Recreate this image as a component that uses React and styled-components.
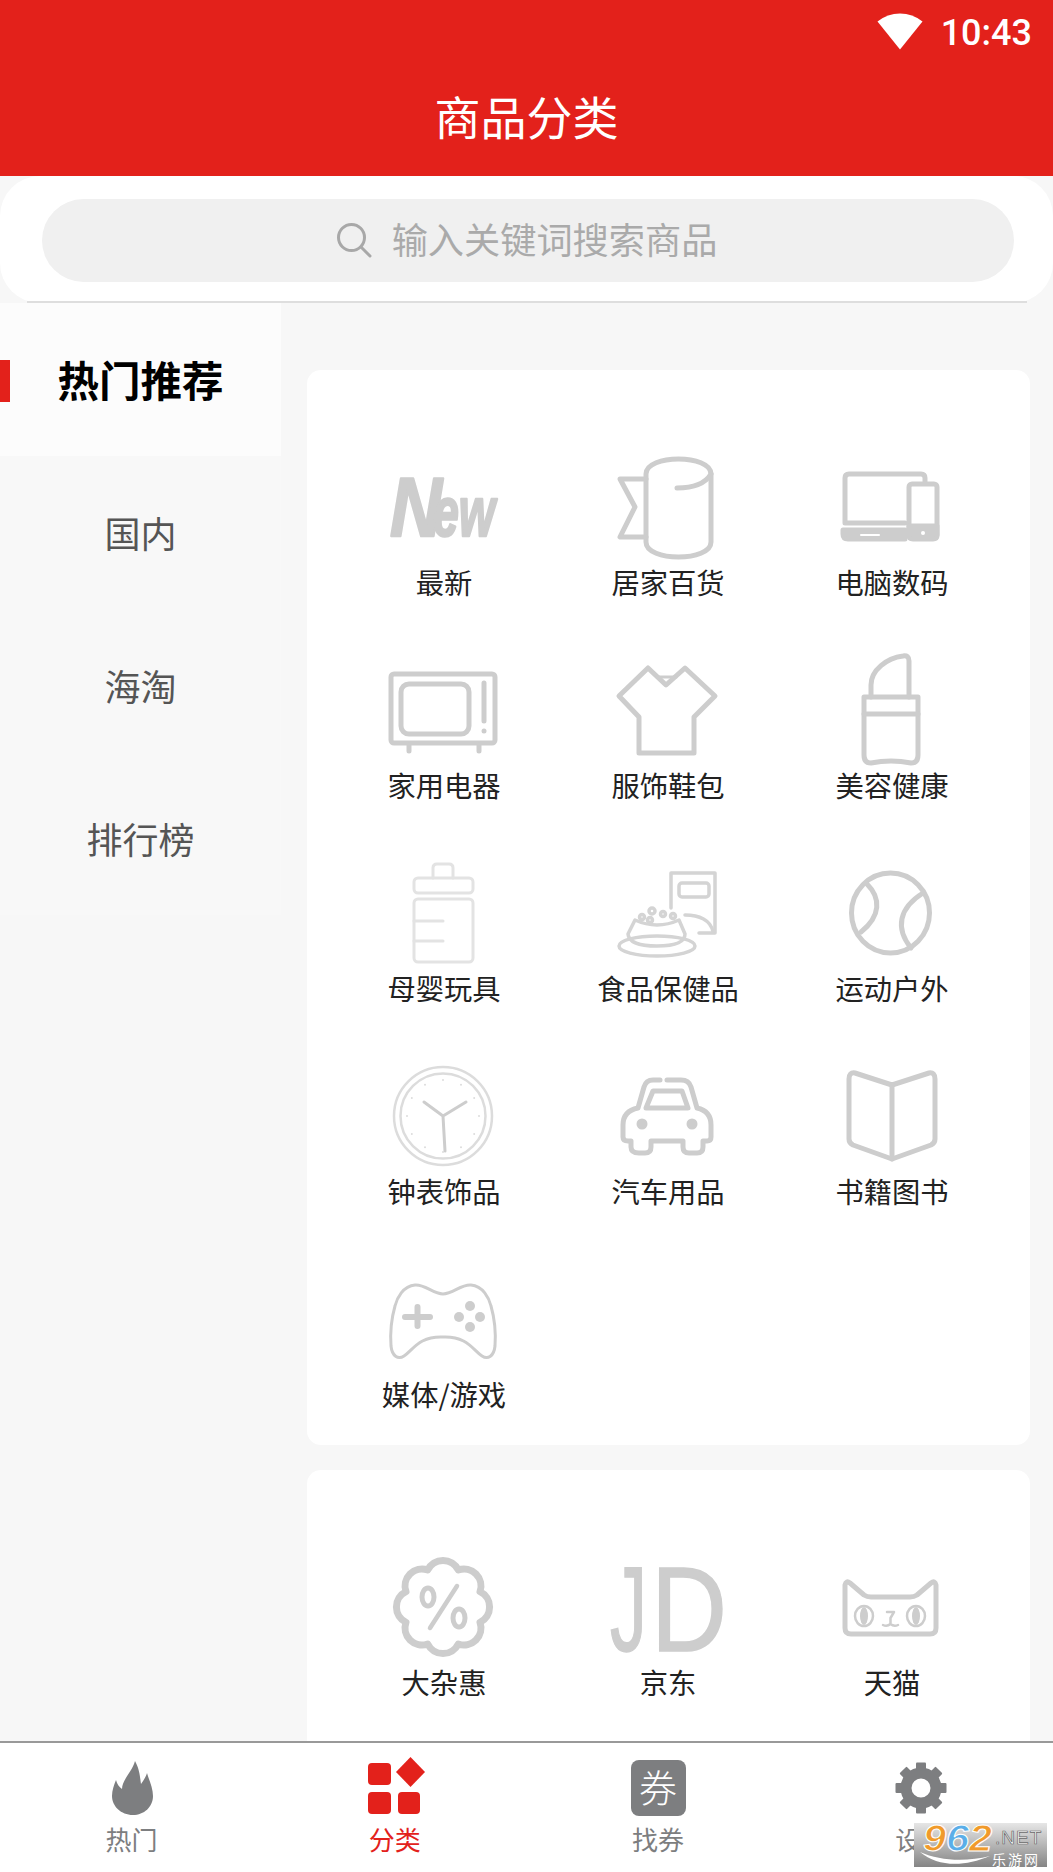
import React from 'react'
import styled, { createGlobalStyle } from 'styled-components'

const CJK = `"Noto Sans CJK SC", "Noto Sans", sans-serif`

const Global = createGlobalStyle`
  html, body {
    margin: 0;
    padding: 0;
    background: #fff;
  }
  * {
    box-sizing: border-box;
  }
`

const Page = styled.div`
  position: relative;
  width: 1053px;
  height: 1872px;
  display: flex;
  flex-direction: column;
  overflow: hidden;
  background: #f7f7f7;
  font-family: ${CJK};
`

const Header = styled.header`
  height: 176px;
  flex: none;
  background: #e3211b;
  color: #fff;
`

const StatusBar = styled.div`
  height: 66px;
  display: flex;
  align-items: center;
  justify-content: flex-end;
  gap: 18px;
  padding-right: 21px;
`

const WifiIcon = styled.svg.attrs({ viewBox: '0 0 46 37' })`
  width: 46px;
  height: 37px;
  margin-bottom: 4px;
  fill: #fff;
`

const Clock = styled.span`
  font-family: Roboto, sans-serif;
  font-weight: 500;
  font-size: 36px;
  line-height: 66px;
`

const Title = styled.h1`
  margin: 0;
  height: 98px;
  font-size: 46px;
  font-weight: 400;
  line-height: 98px;
  text-align: center;
`

const SearchSection = styled.div`
  height: 127px;
  flex: none;
  background: #fff;
  border-radius: 40px;
  display: flex;
  flex-direction: column;
`

const SearchPill = styled.div`
  height: 83px;
  margin: 23px 39px 0 42px;
  padding: 0 3px 2px 0;
  border-radius: 42px;
  background: #f0f0f0;
  display: flex;
  align-items: center;
  justify-content: center;
  gap: 20px;
  color: #aaa;
  font-size: 36.2px;
`

const SearchText = styled.span`
  padding-bottom: 4px;
`

const Divider = styled.div`
  height: 2px;
  margin: 19px 26px 0 27px;
  background: #dedede;
`

const Main = styled.div`
  flex: 1;
  min-height: 0;
  display: flex;
  overflow: hidden;
`

const Sidebar = styled.nav`
  width: 281px;
  flex: none;
`

const SideItem = styled.div`
  position: relative;
  height: 153px;
  padding-bottom: 2px;
  display: flex;
  align-items: center;
  justify-content: center;
  background: ${p => (p.$active ? '#fcfcfc' : '#f8f8f8')};
  color: ${p => (p.$active ? '#000' : '#555')};
  font-size: ${p => (p.$active ? '41.5px' : '36px')};
  font-weight: ${p => (p.$active ? 700 : 400)};

  ${p =>
    p.$active &&
    `&::before {
      content: '';
      position: absolute;
      left: 0;
      top: 57px;
      width: 10px;
      height: 42px;
      background: #e3211b;
    }`}
`

const Pane = styled.div`
  flex: 1;
  padding: 67px 23px 0 26px;
  display: flex;
  flex-direction: column;
  gap: 25px;
`

const Card = styled.section`
  flex: none;
  background: #fff;
  border-radius: 14px;
  padding: 82px 26px 31px 25px;
  display: grid;
  grid-template-columns: repeat(3, 224px);
  align-content: start;
  row-gap: 53px;

  /* the last card runs on under the tab bar */
  &:last-child {
    flex: 1;
    margin-bottom: -30px;
  }
`

const Cell = styled.div`
  display: flex;
  flex-direction: column;
  align-items: center;
`

const CellLabel = styled.span`
  font-size: 28.3px;
  line-height: 40px;
  color: #222;
  white-space: nowrap;
`

const Glyph = styled.svg.attrs({ viewBox: '0 0 110 110' })`
  width: 110px;
  height: 110px;
  overflow: visible;
  fill: none;
  stroke: ${p => p.$tone || '#cdcdcd'};
  stroke-width: ${p => p.$weight || 5}px;
  stroke-linecap: round;
  stroke-linejoin: round;
`

const BottomNav = styled.footer`
  height: 131px;
  flex: none;
  border-top: 2px solid #999;
  background: #fff;
  display: grid;
  grid-template-columns: repeat(4, 1fr);
  padding-top: 15px;
`

const NavItem = styled.div`
  display: flex;
  flex-direction: column;
  align-items: center;
  color: ${p => (p.$active ? '#e3211b' : '#7d7e80')};
  font-size: 26px;
`

const NavIcon = styled.svg.attrs({ viewBox: '0 0 60 60' })`
  width: 60px;
  height: 60px;
  fill: currentColor;
  overflow: visible;
`

const NavLabel = styled.span`
  margin-top: 3px;
  line-height: 36px;
`

const CouponSlot = styled.div`
  width: 60px;
  height: 60px;
  display: flex;
  align-items: center;
  justify-content: center;
`

const CouponBadge = styled.div`
  width: 55px;
  height: 56px;
  border-radius: 8px;
  background: #7d7e80;
  color: #fff;
  font-size: 38px;
  font-weight: 300;
  line-height: 52px;
  text-align: center;
`

const Watermark = styled.div`
  position: absolute;
  left: 914px;
  top: 1823px;
  width: 133px;
  height: 44px;
  background: linear-gradient(180deg, #e6e6e6, #858585);
  overflow: hidden;
`

const MarkDigits = styled.span`
  position: absolute;
  left: 9px;
  top: 1px;
  transform: scaleX(1.15);
  transform-origin: left top;
  font-family: 'Liberation Sans', sans-serif;
  font-style: italic;
  font-weight: 700;
  font-size: 36px;
  line-height: 30px;
  color: #f09a2b;
  -webkit-text-stroke: 1px #fff;

  b {
    color: #5aaee8;
  }
`

const MarkNet = styled.span`
  position: absolute;
  left: 81px;
  top: 5px;
  font-family: 'Liberation Sans', sans-serif;
  font-size: 19px;
  line-height: 20px;
  letter-spacing: 1px;
  color: #fff;
  -webkit-text-stroke: 0.7px #666;
`

const MarkCn = styled.span`
  position: absolute;
  left: 78px;
  top: 28px;
  font-size: 14px;
  line-height: 16px;
  letter-spacing: 2px;
  color: #fff;
`

const MarkSwoosh = styled.svg.attrs({ viewBox: '0 0 133 44' })`
  position: absolute;
  inset: 0;
  width: 133px;
  height: 44px;
`

const IconNew = () => (
  <Glyph>
    <g fill="#cdcdcd" stroke="#cdcdcd" strokeWidth="2.5" fontFamily="'Liberation Sans', sans-serif" fontWeight="700" fontStyle="italic">
      <text x="1" y="84" fontSize="83" textLength="52" lengthAdjust="spacingAndGlyphs">N</text>
      <text x="44" y="84" fontSize="70" textLength="62" lengthAdjust="spacingAndGlyphs">ew</text>
    </g>
  </Glyph>
)

const IconRoll = () => (
  <Glyph>
    <path d="M33 22C33 2 98 2 98 22V90C98 110 33 110 33 90Z" />
    <path d="M64 36C80 36 92 32 98 22" />
    <path d="M33 27H7L22 55L7 85H33" />
  </Glyph>
)

const IconDevices = () => (
  <Glyph>
    <path d="M88 30V26Q88 22 84 22H12Q8 22 8 26V71H68" />
    <path d="M6 78H68V87H11Q6 87 6 82Z" fill="#cdcdcd" />
    <rect x="72" y="32" width="28" height="54" rx="3" />
    <path d="M72 74H100V83Q100 87 96 87H76Q72 87 72 83Z" fill="#cdcdcd" />
    <circle cx="86" cy="81" r="2" fill="#fff" stroke="none" />
    <path d="M24 83H42" stroke="#fff" strokeWidth="2" />
  </Glyph>
)

const IconTv = () => (
  <Glyph>
    <rect x="2" y="19" width="104" height="69" rx="3" />
    <rect x="12" y="29" width="68" height="50" rx="8" />
    <path d="M95 28V66M20 90V96M90 90V96" />
    <circle cx="95" cy="76" r="2.5" fill="#cdcdcd" stroke="none" />
  </Glyph>
)

const IconShirt = () => (
  <Glyph>
    <path d="M35 13L53 30L72 13L102 41L81 62V98H26V62L6 41Z" />
    <path d="M44 22H63" strokeWidth="3" />
  </Glyph>
)

const IconLipstick = () => (
  <Glyph>
    <path d="M34 42V30C34 15 50 3 66 1Q72 0 72 6V42" />
    <path d="M27 42H81V100Q81 108 74 108Q54 104 34 108Q27 108 27 100Z" />
    <path d="M27 59H81" />
  </Glyph>
)

const IconBottle = () => (
  <Glyph $tone="#e3e3e3" $weight={3}>
    <path d="M44 20V10Q44 6 48 6H60Q64 6 64 10V20" />
    <rect x="25" y="20" width="59" height="15" rx="4" />
    <rect x="25" y="41" width="59" height="63" rx="4" />
    <path d="M25 63H54M25 83H54" />
  </Glyph>
)

const IconPetFood = () => (
  <Glyph $weight={3.5} $tone="#d4d4d4">
    <path d="M58 50V15H102V75H86" />
    <path d="M72 57C86 57 98 62 100 74" />
    <rect x="66" y="25" width="30" height="14" rx="3" />
    <path d="M22 62L15 76Q16 88 44 88Q72 88 72 76L66 62Q44 72 22 62Z" />
    <ellipse cx="44" cy="88" rx="38" ry="10" />
    <circle cx="29" cy="59" r="2.5" />
    <circle cx="39" cy="53" r="3" />
    <circle cx="37" cy="62" r="2.5" />
    <circle cx="50" cy="56" r="2.5" />
    <circle cx="60" cy="58" r="2.5" />
  </Glyph>
)

const IconBall = () => (
  <Glyph>
    <ellipse cx="53.5" cy="55" rx="39" ry="40" />
    <path d="M30 26C44 40 44 58 24 74" />
    <path d="M86 35C62 50 58 70 74 90" />
  </Glyph>
)

const ticks = [0, 30, 60, 90, 120, 150, 180, 210, 240, 270, 300, 330]

const IconClock = () => (
  <Glyph $tone="#dcdcdc" $weight={2.5}>
    <circle cx="54" cy="55" r="49" />
    <circle cx="54" cy="55" r="42.5" />
    {ticks.map(a => (
      <circle
        key={a}
        cx={54 + 36 * Math.sin((a * Math.PI) / 180)}
        cy={55 - 36 * Math.cos((a * Math.PI) / 180)}
        r="1"
        fill="#dcdcdc"
        stroke="none"
      />
    ))}
    <path d="M54 55L35 41M54 55L77 41M54 55L56 90" stroke="#cdcdcd" strokeWidth="3" />
  </Glyph>
)

const IconCar = () => (
  <Glyph>
    <path d="M47 19H40Q33 19 31 26L25 47Q10 50 10 64V76Q10 80 15 80H18V86Q18 92 26 92H32Q38 92 38 86V80H70V86Q70 92 76 92H84Q90 92 90 86V80H94Q98 80 98 76V64Q98 50 84 47L78 26Q76 19 68 19H54" />
    <path d="M33 47L40 30H69L75 47Z" />
    <circle cx="29" cy="63" r="5.5" fill="#cdcdcd" stroke="none" />
    <circle cx="79" cy="63" r="5.5" fill="#cdcdcd" stroke="none" />
  </Glyph>
)

const IconBook = () => (
  <Glyph>
    <path d="M55 24L18 12Q12 11 12 18V78Q12 82 16 84L55 98L94 84Q98 82 98 78V18Q98 11 92 12Z" />
    <path d="M55 24V98" />
  </Glyph>
)

const IconGamepad = () => (
  <Glyph $weight={3}>
    <path d="M54 30C44 30 36 20 26 21C14 22 8 34 6 42C2 56 1 68 2 82C3 92 9 96 15 92C24 86 30 72 54 73C78 72 84 86 93 92C99 96 105 92 106 82C107 68 106 56 102 42C100 34 94 22 82 21C72 20 64 30 54 30Z" />
    <path d="M28.5 43V62M16 53H41" strokeWidth="6" />
    <g fill="#cdcdcd" stroke="none">
      <circle cx="81" cy="42" r="5" />
      <circle cx="81" cy="63" r="5" />
      <circle cx="70" cy="53" r="5" />
      <circle cx="91" cy="53" r="5" />
    </g>
  </Glyph>
)

const IconDiscount = () => (
  <Glyph $weight={7}>
    <path d="M69.3 18A17 17 0 0 1 91 39.7A17 17 0 0 1 91 70.3A17 17 0 0 1 69.3 92A17 17 0 0 1 38.7 92A17 17 0 0 1 17 70.3A17 17 0 0 1 17 39.7A17 17 0 0 1 38.7 18A17 17 0 0 1 69.3 18Z" />
    <ellipse cx="39" cy="45" rx="6" ry="9" strokeWidth="5" />
    <ellipse cx="70" cy="66" rx="6" ry="9" strokeWidth="5" />
    <path d="M68 34L41 76" strokeWidth="4.5" />
  </Glyph>
)

const IconJd = () => (
  <Glyph>
    <g fontFamily="'Liberation Sans', sans-serif" fontSize="120" fill="#cdcdcd" strokeWidth="1.5" strokeLinejoin="miter">
      <text x="-3" y="99" textLength="37" lengthAdjust="spacingAndGlyphs">J</text>
      <text x="38" y="99" textLength="76" lengthAdjust="spacingAndGlyphs">D</text>
    </g>
  </Glyph>
)

const IconCat = () => (
  <Glyph>
    <path d="M8 33Q9 28 13 31L27 43Q30 45 34 45H73Q77 45 80 43L94 31Q98 28 99 33V76Q99 82 93 82H14Q8 82 8 76Z" />
    <g strokeWidth="2.5">
      <ellipse cx="27" cy="64" rx="9" ry="10" />
      <ellipse cx="79" cy="64" rx="9" ry="10" />
      <path d="M50 60H57L53.5 66V72M46 73Q50 75 53.5 72Q57 75 61 73" />
    </g>
    <ellipse cx="27" cy="64" rx="4" ry="9" fill="#cdcdcd" stroke="none" />
    <ellipse cx="79" cy="64" rx="4" ry="9" fill="#cdcdcd" stroke="none" />
  </Glyph>
)

const MAIN_CATEGORIES = [
  ['最新', IconNew],
  ['居家百货', IconRoll],
  ['电脑数码', IconDevices],
  ['家用电器', IconTv],
  ['服饰鞋包', IconShirt],
  ['美容健康', IconLipstick],
  ['母婴玩具', IconBottle],
  ['食品保健品', IconPetFood],
  ['运动户外', IconBall],
  ['钟表饰品', IconClock],
  ['汽车用品', IconCar],
  ['书籍图书', IconBook],
  ['媒体/游戏', IconGamepad],
]

const STORES = [
  ['大杂惠', IconDiscount],
  ['京东', IconJd],
  ['天猫', IconCat],
]

const SIDE_ITEMS = ['热门推荐', '国内', '海淘', '排行榜']

const Grid = ({ items }) => (
  <Card>
    {items.map(([label, Icon]) => (
      <Cell key={label}>
        <Icon />
        <CellLabel>{label}</CellLabel>
      </Cell>
    ))}
  </Card>
)

const gearTeeth = [0, 45, 90, 135, 180, 225, 270, 315]

export default function App() {
  return (
    <Page>
      <Global />
      <Header>
        <StatusBar>
          <WifiIcon>
            <path d="M23 36.5L0.5 8.5Q10.5 0.5 23 0.5Q35.5 0.5 45.5 8.5Z" />
          </WifiIcon>
          <Clock>10:43</Clock>
        </StatusBar>
        <Title>商品分类</Title>
      </Header>
      <SearchSection>
        <SearchPill>
          <svg width="36" height="36" viewBox="0 0 36 36" fill="none" stroke="#a8a8a8" strokeWidth="3">
            <circle cx="15.5" cy="15.5" r="13" />
            <path d="M25 25L34 34" strokeLinecap="round" />
          </svg>
          <SearchText>输入关键词搜索商品</SearchText>
        </SearchPill>
        <Divider />
      </SearchSection>
      <Main>
        <Sidebar>
          {SIDE_ITEMS.map((item, i) => (
            <SideItem key={item} $active={i === 0}>
              {item}
            </SideItem>
          ))}
        </Sidebar>
        <Pane>
          <Grid items={MAIN_CATEGORIES} />
          <Grid items={STORES} />
        </Pane>
      </Main>
      <BottomNav>
        <NavItem>
          <NavIcon>
            <path d="M33 3C38 12 38 20 39 26C41 23 44 19 45 15C47 22 51 30 51 38C51 49 42 57 31 57C19 57 10 48 10 38C10 32 12 27 14 22C15 26 17 29 20 31C20 22 30 14 33 3Z" />
          </NavIcon>
          <NavLabel>热门</NavLabel>
        </NavItem>
        <NavItem $active>
          <NavIcon>
            <rect x="3" y="5" width="23" height="22" rx="4" />
            <rect x="3" y="34" width="23" height="22" rx="4" />
            <rect x="33" y="34" width="22" height="22" rx="4" />
            <path d="M45.5 -1L60 14L45.5 29L31 14Z" />
          </NavIcon>
          <NavLabel>分类</NavLabel>
        </NavItem>
        <NavItem>
          <CouponSlot>
            <CouponBadge>券</CouponBadge>
          </CouponSlot>
          <NavLabel>找券</NavLabel>
        </NavItem>
        <NavItem>
          <NavIcon>
            <circle cx="30" cy="30" r="15" fill="none" stroke="currentColor" strokeWidth="11" />
            {gearTeeth.map(a => (
              <rect key={a} x="25" y="4.5" width="10" height="8" rx="1" transform={`rotate(${a} 30 30)`} />
            ))}
          </NavIcon>
          <NavLabel>设置</NavLabel>
        </NavItem>
      </BottomNav>
      <Watermark>
        <MarkSwoosh>
          <path d="M6 29C24 44 50 44 76 33C52 39 26 38 6 29Z" fill="#fff" />
        </MarkSwoosh>
        <MarkDigits>9<b>6</b>2</MarkDigits>
        <MarkNet>.NET</MarkNet>
        <MarkCn>乐游网</MarkCn>
      </Watermark>
    </Page>
  )
}
